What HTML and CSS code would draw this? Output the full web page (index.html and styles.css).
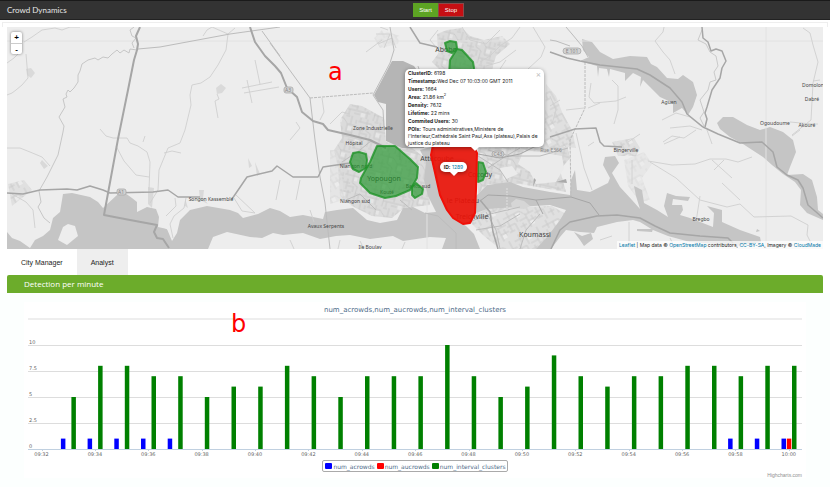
FILE: index.html
```
<!DOCTYPE html>
<html lang="en">
<head>
  <meta charset="UTF-8">
  <title>Crowd Dynamics</title>
  <link rel="stylesheet" href="styles.css">
</head>
<body>

<header class="navbar">
  <div class="brand">Crowd Dynamics</div>
  <button class="btn start-btn" type="button">Start</button>
  <button class="btn stop-btn" type="button">Stop</button>
</header>

<div class="well"></div>

<main class="page">
  <div class="map">
    <svg class="map-canvas" viewBox="7 27 816 222" preserveAspectRatio="xMidYMin slice" aria-hidden="true">
      <defs>
        <pattern id="streets" width="29" height="27" patternUnits="userSpaceOnUse" patternTransform="rotate(14)">
          <rect width="29" height="27" fill="#dbdbdb"/>
          <path d="M0 4H14M9 0V11M14 4L19 9H29M0 12H7M4 8V19M9 11L15 14 14 27M19 9V17H26M22 0V9M25 12V20M0 21H10M7 19V27M14 21H29M18 21V27M23 24H29M11 16V20M2 0V4M27 3V7M16 1H20M5 15H12" stroke="#c6c6c6" stroke-width=".8" fill="none"/>
          <path d="M10 5H13V9H10ZM20 11H24V15H20ZM1 22H5V26H1Z" fill="#e6e6e6"/>
        </pattern>
        <pattern id="streets2" width="31" height="25" patternUnits="userSpaceOnUse" patternTransform="rotate(-28)">
          <rect width="31" height="25" fill="#e0e0e0"/>
          <path d="M0 5H18M6 0V9M12 5V14M18 5L22 11H31M0 14H9M3 9V20M9 14V25M14 14H22M22 11V25M26 2V11M22 18H31M0 20H6M12 20H19M16 17V25M27 14V21" stroke="#c8c8c8" stroke-width=".8" fill="none"/>
          <path d="M13 6H17V10H13ZM23 19H27V23H23Z" fill="#ebebeb"/>
        </pattern>
      </defs>
      <rect x="7" y="27" width="816" height="222" fill="#ededed"/>

      <!-- built-up areas -->
      <g fill="url(#streets)">
        <path d="M437 34L447 30 462 28 470 36 484 40 502 36 510 44 496 56 492 70 440 70 432 62 438 54Z"/>
        <path d="M350 104L362 106 384 118 386 142 412 148 428 160 430 205 404 208 392 218 372 216 352 206 340 196 338 168 334 150 342 138 340 120Z"/>
        <path d="M478 148L520 146 566 140 570 158 560 170 566 192 520 184 488 184 478 194Z"/>
      </g>
      <g fill="url(#streets2)">
        <path d="M476 208L520 207 552 206 566 214 556 234 548 249 500 249 484 236 470 222Z"/>
        <path d="M546 84L556 96 562 112 572 130 576 148 556 146 544 148Z"/>
        <path d="M382 30L400 36 398 44 380 48 374 38Z" opacity=".5"/>
        <path d="M612 142L634 138 640 148 636 156 618 156Z"/>
        <path d="M8 184L24 180 32 190 22 198 12 206Z"/>
        <path d="M330 150L340 150 344 200 330 204Z" opacity=".6"/>
        <path d="M624 160L644 152 652 164 642 178 650 200 640 202 628 186Z" opacity=".5"/>
      </g>
      <path d="M42 160L48 166 44 169 40 163ZM148 187L154 188 152 208 148 204ZM199 190L204 190 203 198 208 204 200 200ZM185 198L188 208 185 206ZM248 158L252 166 249 168ZM255 162L260 174 257 176Z" fill="#d9d9d9"/>
      <path d="M26 69L31 68 35 73 31 78 27 75ZM216 88L221 84 226 88 222 93 217 94Z" fill="#dadada"/>
      <path d="M524 150L540 152 562 156 564 168 556 182 536 184 530 172 518 164ZM500 168L512 166 518 174 504 180Z" fill="#ebebeb"/>
      <path d="M533 187L534 178 536 180ZM556 182L566 179 567 183Z" fill="#aaaaaa"/>

      <!-- lagoon and lakes -->
      <g fill="#c5c5c5">
        <path d="M7 232L12 238 20 241 30 248 35 240 43 236 50 230 53 218 60 212 63 194 72 193 90 197 98 202 103 208 117 195 125 193 132 198 137 202 137 212 147 207 156 209 159 217 158 227 167 229 172 241 177 233 180 220 190 210 207 206 230 210 238 213 243 218 258 214 270 208 280 211 290 217 303 215 323 219 325 212 337 210 353 208 360 214 367 220 380 223 397 220 403 208 413 207 425 213 436 212 428 196 424 180 426 162 420 150 434 146 440 195 452 218 466 226 474 234 480 249 442 249 446 238 430 237 403 241 393 236 370 239 350 235 336 236 320 239 303 233 283 235 273 233 262 238 250 237 227 232 213 237 208 249 7 249Z"/>
        <path d="M476 196L487 185 510 182 523 187 550 192 570 195 571 180 575 170 577 190 590 192 608 183 610 178 603 165 605 157 615 156 619 163 612 173 620 187 632 200 640 209 636 196 634 186 642 190 644 203 657 210 668 217 664 206 667 193 676 196 690 197 688 201 673 199 672 205 682 205 683 210 680 215 690 218 713 227 714 213 707 206 722 210 722 222 740 230 760 237 761 242 737 246 690 242 668 236 653 230 640 222 633 220 617 222 597 227 594 233 580 232 566 230 560 237 551 249 536 249 548 236 560 220 566 210 550 205 517 207 487 209 476 213Z"/>
        <path d="M582 39L592 42 600 52 613 59 630 56 647 57 651 64 657 67 667 78 678 79 683 75 693 82 697 95 693 107 688 115 682 108 673 113 673 103 660 97 650 87 643 80 640 87 641 77 633 73 625 81 625 73 610 69 609 77 607 69 599 68 598 77 597 66 580 61 589 57 583 50Z"/>
        <path d="M717 123L723 117 733 117 747 125 760 130 770 127 783 132 793 140 796 152 790 167 787 175 803 174 812 180 817 197 818 210 823 214V220L807 213 800 205 801 190 795 182 783 174 772 165 763 157 743 144 730 137 720 129Z"/>
        <path d="M574 232L582 236 591 233 593 239 584 246 580 240ZM637 229L653 229 652 232 637 231ZM757 229L760 231 756 232Z"/>
      </g>
      <path d="M392 61L403 61 414 66 424 80V148H402L386 141V104L378 102 374 95Z" fill="#b5b5b5"/>
      <g fill="#ededed">
        <path d="M58 240L63 227 68 224 75 226 78 236 67 245Z"/>
        <path d="M161 219L168 214 174 216 174 226 168 230 162 226Z"/>
      </g>
      <path d="M511 203L516 199 524 201 530 206 524 209 512 208Z" fill="#d6d6d6"/>

      <!-- tile edges -->
      <path d="M766 27V249M7 41H823M427 200V249" stroke="#e2e2e2"/>

      <!-- minor roads -->
      <g fill="none" stroke="#cfcfcf" stroke-width=".9">
        <path d="M24 42L32 37 42 30 55 28 62 30 70 27 80 27M7 63L14 58 18 54M26 54L27 66 28 78 22 85 16 90 12 93 7 95"/>
        <path d="M137 50L130 49 129 53 124 50 120 53 117 50 112 54 108 58 103 57 98 60 95 58 88 60 82 64 80 71 78 75 78 82 74 88 70 92 68 90 66 94 67 97 63 99 65 107 59 117 64 126 63 132 58 155 47 177 39 191 41 202 38 207 44 218 50 223" stroke="#c2c2c2"/>
        <path d="M134 27L130 30 132 36 136 38 132 43 134 48" stroke="#c2c2c2"/>
        <path d="M203 36L207 30 212 27 228 34 235 28M228 34L226 50 218 65 210 77 201 83 192 85 190 95 191 105 185 130 180 143 168 148 159 170 158 190 150 203M217 94L219 99 215 101 218 118M164 153L172 151 181 153"/>
        <path d="M100 129L106 136 113 138 120 138 127 138 130 143 138 146 147 152 150 162 149 190M116 146L124 161 136 175 149 177M145 136L143 142"/>
        <path d="M7 148L20 148 30 152 42 157 50 166M12 194L26 202 33 210 35 228"/>
        <path d="M175 198L176 206 166 216M186 198L184 208 174 216 170 224 173 238M234 198L242 211 255 213 236 195"/>
        <path d="M255 60L260 84M247 80L252 103M242 88L272 82M244 93L279 87M376 34L390 34 384 48M378 44L392 38 396 48M366 52L382 40M380 27L388 30"/>
        <path d="M322 98L324 112 320 120M296 122L300 128 290 140M330 124L342 112 350 114M280 180L276 200M300 180L296 200M310 210L314 222M290 240L294 249M340 240L338 249M360 241L364 249M405 242L402 249"/>
        <path d="M664 27L663 32 655 41 663 52 670 60 675 74M803 28L810 33 813 45 818 62 813 83 811 120 792 135M790 122L812 124 818 124M813 81L820 80"/>
        <path d="M591 83L589 97 594 103 616 101 626 97M612 80L618 86 618 110 614 124M550 96L556 110 552 124M588 108L600 103M560 100L550 106M566 110L584 108"/>
        <path d="M648 161L672 165 695 164 710 159 726 159 738 162 752 157M650 162L676 178 700 200 727 207 740 204 754 217 791 216 808 225 807 235 811 243M722 183L740 200M700 196L696 222M712 160L732 178M724 160L714 170M707 130L712 144"/>
        <path d="M663 142L672 136 684 138 696 130M662 120L676 113 690 117 702 127M680 137L664 144M670 128L690 126 702 130M640 134L628 142M792 136L800 130"/>
        <path d="M576 133L584 168 592 190M588 146L594 142M632 160V184M629 222V249M600 240L612 236M670 238L674 246M700 244L706 247"/>
        <path d="M480 62L490 56 500 46 512 38 520 27M486 66L500 62 516 50M462 27L470 40 486 44 500 30M533 27L545 47 541 57 528 69M500 69L506 60M438 30L430 40 436 47"/>
      </g>
      <g fill="none" stroke="#bcbcbc" stroke-width="1">
        <path d="M138 49L160 47 230 34 280 27M262 31L280 56M270 43L310 98L315 140 320 177 325 203 330 249M390 27L394 50 390 63 373 95 383 110 384 127"/>
        <path d="M310 98L373 93M585 62V108L570 140 571 197" stroke-dasharray="3 1"/>
        <path d="M702 30L698 40 706 44 710 52 716 56 718 66 714 72 716 80 710 82 708 90 700 100 704 112 700 118 704 126" stroke="#cacaca"/>
        <path d="M550 40L556 41 570 46M566 27L572 34 582 46 588 57M418 66L424 84M425 213L438 216 456 233V249M464 224L490 214 520 207"/>
        <path d="M342 162L360 150 372 140M346 200L360 194 376 210M400 148V160M400 200L412 210M488 150L510 156 540 156 568 148M488 168L506 156 520 148M478 156L500 170 508 182M476 230L500 226 520 214M500 249L496 230 486 212M520 249L526 230 540 214"/>
      </g>
      <path d="M507 188V210" stroke="#e0e0e0" stroke-dasharray="2 1"/>

      <!-- main roads -->
      <g fill="none" stroke="#a6a6a6" stroke-width="1.5" stroke-linejoin="round">
        <path d="M140 27L136 36 138 44 137 50 134 60 128 90 118 139 104 215 130 220 157 225 154 232 157 238 163 239 169 248" stroke-width="2"/>
        <path d="M250 27L255 42 265 56 275 66 281 73 287 88 297 97 302 112 313 121 323 124 328 130 350 135 370 140 386 148" stroke-width="2"/>
        <path d="M7 193L23 194 40 190 67 189 77 190 90 186 103 190 110 193 153 192 168 190 178 197 200 197M232 199L247 177 272 171 277 166 293 177 318 177 323 167 350 163"/>
        <path d="M550 52L567 58 580 61 600 65 637 69 650 75 670 88 682 102 687 114 703 127 718 134 740 143 762 142 773 152 777 167 787 175 798 180 803 188 808 205 823 218"/>
        <path d="M702 27L703 38 708 42 711 51 716 49 722 51 726 61 722 68 720 78 712 90 707 107 705 113 707 119 705 127"/>
        <path d="M550 137L575 129 596 128 600 142 604 146 622 147M410 27L420 43 437 47M480 200L490 212 493 232 498 249M551 249L560 230 570 222 597 216 617 215 640 218 655 226 670 233 700 236 728 238 733 243"/>
        <path d="M480 201L488 195 510 196 536 200 571 197 590 203 599 215M536 200L543 214M478 154L500 158 520 154 536 146" stroke-width="1"/>
      </g>
      <g fill="#d2d2d2" stroke="#aaa" stroke-width=".8">
        <rect x="117" y="189" width="9" height="6" rx="2"/>
        <rect x="284" y="87" width="9" height="6" rx="2"/>
        <rect x="563" y="48" width="18" height="6" rx="3"/>
        <rect x="492" y="151" width="12" height="6" rx="3"/>
      </g>

      <g class="shield">
        <text x="121" y="194">A1</text>
        <text x="288" y="92">A3</text>
        <text x="572" y="53">E 101</text>
        <text x="498" y="156">C43</text>
        <text x="551" y="152">Rue E366</text>
      </g>
      <g class="place">
        <text x="669" y="104">Aguen</text>
        <text x="813" y="87">Domolon</text>
        <text x="812" y="101">Dabré</text>
        <text x="775" y="125">Ogoudoume</text>
        <text x="807" y="127">Akouré</text>
        <text x="626" y="152">Bingerville</text>
        <text x="701" y="221">Bregbo</text>
        <text x="211" y="201">Songon Kassemblé</text>
        <text x="373" y="130">Zone Industrielle</text>
        <text x="354" y="145">Hôpital</text>
        <text x="356" y="168">Niangon nord</text>
        <text x="387" y="194">Kouté</text>
        <text x="418" y="188">Banco sud</text>
        <text x="355" y="203">Niangon sud</text>
        <text x="326" y="228">Avaux Serpents</text>
        <text x="370" y="249">Ile Boulay</text>
      </g>
      <g class="place town">
        <text x="384" y="181">Yopougon</text>
        <text x="437" y="161">Attécoube</text>
        <text x="480" y="177">Cocody</text>
        <text x="463" y="203">le Plateau</text>
        <text x="472" y="219">Treichville</text>
        <text x="535" y="237">Koumassi</text>
        <text x="446" y="52">Abobo</text>
      </g>

      <!-- detected clusters -->
      <g class="cluster">
        <path d="M445 43L450 41 456 42 457 48 452 53 447 51Z"/>
        <path d="M457 49L462 50 473 62 475 74H449L450 60Z"/>
        <path d="M377 146H395L410 159 418 167 417 178 410 190 396 196 385 198 370 193 360 183 361 178 370 162Z"/>
        <path d="M353 153L359 152 366 154 367 160 366 168 359 172 353 169 350 162Z"/>
        <path d="M416 183L423 189 422 194 415 198 412 195 412 187Z"/>
        <path d="M478 162L483 163 486 172 483 180 478 182Z"/>
      </g>
      <path class="cluster-active" d="M434 140L431 155 440 195 447 210 453 218 463 224 470 223 475 213 476 190 477 153 470 140Z"/>
    </svg>

    <div class="zoom-control">
      <button type="button" aria-label="Zoom in">+</button>
      <button type="button" aria-label="Zoom out">-</button>
    </div>

    <div class="popup popup-id"><b>ID:</b> <a href="#">1289</a></div>

    <div class="popup popup-info">
      <button class="close" type="button" aria-label="Close">×</button>
      <div><b>ClusterID:</b> 6198</div>
      <div><b>Timestamp:</b>Wed Dec 07 10:03:00 GMT 2011</div>
      <div><b>Users:</b> 1664</div>
      <div><b>Area:</b> 21.86 km<sup>2</sup></div>
      <div><b>Density:</b> 76.12</div>
      <div><b>Lifetime:</b> 22 mins</div>
      <div><b>Commited Users:</b> 30</div>
      <div><b>POIs:</b> Tours administratives,Ministere de l'Interieur,Cathédrale Saint Paul,Axa (plateau),Palais de justice du plateau</div>
    </div>

    <div class="mark mark-a">a</div>

    <div class="attribution"><a href="#">Leaflet</a> | Map data © <a href="#">OpenStreetMap</a> contributors, <a href="#">CC-BY-SA</a>, Imagery © <a href="#">CloudMade</a></div>
  </div>

  <nav class="tabs">
    <button type="button">City Manager</button>
    <button type="button" class="active">Analyst</button>
  </nav>

  <h2 class="panel-title">Detection per minute</h2>
</main>

<section class="panel-body">
  <div class="chart">
    <div class="mark mark-b">b</div>
    <div class="chart-title">num_acrowds,num_aucrowds,num_interval_clusters</div>
    <svg class="plot" id="plot" viewBox="0 0 774 140"></svg>
    <div class="legend">
      <span class="key blue"></span>num_acrowds
      <span class="key red"></span>num_aucrowds
      <span class="key green"></span>num_interval_clusters
    </div>
    <a class="credits" href="#">Highcharts.com</a>
  </div>
</section>

<script src="chart.js"></script>
</body>
</html>
```
FILE: styles.css
```
body {
  margin: 0;
  font-family: "Liberation Sans", Arial, sans-serif;
  font-size: 6px;
  background-color: #ffffff;
  color: #222222;
}

button {
  margin: 0;
  padding: 0;
  border: none;
  font-family: inherit;
  cursor: pointer;
}

a {
  color: #0078a8;
  text-decoration: none;
}

/* top bar */
.navbar {
  display: flex;
  align-items: center;
  box-sizing: border-box;
  height: 20px;
  background-color: #333333;
  border-top: 1px solid #1a1a1a;
  border-bottom: 1px solid #222222;
}

.brand {
  box-sizing: border-box;
  flex: 0 0 calc(50% - 2px);
  padding-left: 7px;
  font-family: Lato, "Open Sans", sans-serif;
  font-size: 8px;
  color: #e6e6e6;
}

.btn {
  box-sizing: border-box;
  width: 25px;
  height: 14px;
  font-size: 6px;
  color: #ffffff;
}

.start-btn { background-color: #5da423; }

.stop-btn {
  width: 26px;
  background-color: #c60f13;
  border: 1px solid #8a4a4b;
}

.well {
  height: 4px;
  margin: 2px 2px 0;
  border: 1px solid #eeeeee;
  border-bottom: none;
}

.page {
  margin: 0 7px;
}

/* map */
.map {
  position: relative;
  overflow: hidden;
}

.map-canvas {
  display: block;
  width: 100%;
  height: 222px;
}

.place {
  font-family: "Noto Sans", sans-serif;
  font-size: 5px;
  text-anchor: middle;
  fill: #444444;
}

.town { font-size: 7px; }

.shield {
  font-family: "Noto Sans", sans-serif;
  font-size: 5px;
  text-anchor: middle;
  fill: #888888;
}

.cluster {
  fill: #1f9428;
  fill-opacity: 0.65;
  stroke: #1f9428;
  stroke-opacity: 0.8;
  stroke-width: 2;
  stroke-linejoin: round;
}

.cluster-active {
  fill: #e81208;
  fill-opacity: 0.92;
  stroke: #f01008;
  stroke-width: 2;
  stroke-linejoin: round;
}

.zoom-control {
  position: absolute;
  left: 4px;
  top: 5px;
  width: 11px;
  border-radius: 2px;
  background-color: #ffffff;
  box-shadow: 0 0 3px rgba(0,0,0,0.5);
}

.zoom-control button {
  display: block;
  width: 11px;
  height: 11px;
  line-height: 11px;
  background: none;
  font-size: 8px;
  font-weight: bold;
  color: #000000;
}

.zoom-control button + button {
  border-top: 1px solid #cccccc;
}

.popup {
  position: absolute;
  box-sizing: border-box;
  background-color: #ffffff;
  box-shadow: 0 1px 4px rgba(0,0,0,0.4);
  font-family: Inter, "Liberation Sans", sans-serif;
  font-size: 5px;
}

.popup::after {
  content: "";
  position: absolute;
  top: 100%;
  left: 50%;
  margin-left: -4px;
  border: 4px solid transparent;
  border-top-color: #ffffff;
  border-bottom: none;
}

.popup-id {
  left: calc(50% + 25px);
  top: 135px;
  width: 27px;
  height: 10px;
  border-radius: 5px;
  line-height: 10px;
  text-align: center;
}

.popup-info {
  display: flex;
  flex-direction: column;
  gap: 1px;
  left: calc(50% - 10px);
  top: 42px;
  width: 139px;
  padding: 1px 3px 0;
  border-radius: 5px;
  line-height: 7px;
}

.popup-info sup {
  font-size: 4px;
  line-height: 0;
}

.close {
  position: absolute;
  right: 3px;
  top: 2px;
  background: none;
  font-size: 8px;
  line-height: 7px;
  color: #bbbbbb;
}

.attribution {
  position: absolute;
  right: 0;
  bottom: 0;
  padding: 0 2px;
  background-color: rgba(255,255,255,0.7);
  font-family: Inter, "Liberation Sans", sans-serif;
  font-size: 5px;
  line-height: 8px;
}

.mark {
  position: absolute;
  font-family: "DejaVu Sans", sans-serif;
  font-size: 24px;
  line-height: 28px;
  color: #ff0000;
}

.mark-a {
  left: calc(50% - 87px);
  top: 31px;
}

.mark-b {
  left: 207px;
  top: 8px;
}

/* tabs */
.tabs {
  display: flex;
}

.tabs button {
  height: 26px;
  padding: 0 14px;
  background-color: #ffffff;
  font-size: 7px;
  color: #222222;
}

.tabs .active { background-color: #eeeeee; }

.panel-title {
  margin: 0;
  padding-left: 17px;
  border-radius: 2px 2px 0 0;
  background-color: #6cac2b;
  font-family: "Open Sans", sans-serif;
  font-size: 8px;
  font-weight: normal;
  line-height: 18px;
  color: #ffffff;
}

.panel-body {
  padding: 9px 24px;
  background-color: #fcfffe;
}

/* chart */
.chart {
  position: relative;
  padding: 4px 4px 0;
  background-color: #ffffff;
  font-family: "DejaVu Sans", sans-serif;
  color: #4d6b89;
}

.chart-title {
  font-size: 7px;
  line-height: 9px;
  padding-bottom: 3px;
  text-align: center;
}

.plot {
  display: block;
  width: 100%;
}

.plot text {
  font-size: 5px;
  fill: #666666;
}

.legend {
  display: flex;
  align-items: center;
  box-sizing: border-box;
  width: fit-content;
  height: 12px;
  margin: 2px auto 0;
  padding: 0 1px 0 2px;
  border: 1px solid #aaaaaa;
  border-radius: 2px;
  font-size: 6px;
}

.key {
  width: 7px;
  height: 6px;
  margin: 0 1px 0 2px;
  border-radius: 1px;
}

.key:first-child { margin-left: 0; }

.blue { background-color: #0000ff; }
.red { background-color: #ff0000; }
.green { background-color: #008000; }

.credits {
  display: block;
  font-family: "Liberation Sans", Arial, sans-serif;
  font-size: 5px;
  line-height: 6px;
  text-align: right;
  color: #909090;
}
```
FILE: chart.js
```
const plot = document.getElementById('plot');
const baseline = 131;
const unit = 10.4;

// one value per minute, from 09:32 to 10:00
const acrowds   = [0,1,1,1,1,1,0,0,0,0,0,0,0,0,0,0,0,0,0,0,0,0,0,0,0,0,1,1,1];
const aucrowds  = [0,0,0,0,0,0,0,0,0,0,0,0,0,0,0,0,0,0,0,0,0,0,0,0,0,0,0,0,1];
const intervals = [0,5,8,8,7,7,5,6,6,8,7,5,7,7,7,10,7,5,6,9,7,6,7,7,8,8,7,8,8];

let out = '<rect x="0" y="0" width="774" height="2" fill="#eeeeee"/>';

[10, 7.5, 5, 2.5, 0].forEach(v => {
  const y = Math.round(baseline - v * unit);
  out += `<rect x="0" y="${y}" width="774" height="1" fill="${v ? '#dddddd' : '#c0d0e0'}"/>`;
  out += `<text x="1" y="${y - 1}">${v}</text>`;
});

function bar(x, value, color) {
  if (!value) return;
  const h = value * unit;
  out += `<rect x="${x.toFixed(1)}" y="${(baseline - h).toFixed(1)}" width="4.5" height="${h.toFixed(1)}" fill="${color}"/>`;
}

for (let i = 0; i <= 28; i++) {
  const x = 13.5 + i * 26.69;
  bar(x - 7.3, acrowds[i], '#0000ff');
  bar(x - 2, aucrowds[i], '#ff0000');
  bar(x + 3.2, intervals[i], '#008000');
  if (i % 2 === 0) {
    const label = i === 28 ? '10:00' : '09:' + (32 + i);
    out += `<rect x="${Math.round(x)}" y="${baseline}" width="1" height="2" fill="#c0d0e0"/>`;
    out += `<text x="${x.toFixed(1)}" y="138" text-anchor="middle">${label}</text>`;
  }
}

plot.innerHTML = out;
```
